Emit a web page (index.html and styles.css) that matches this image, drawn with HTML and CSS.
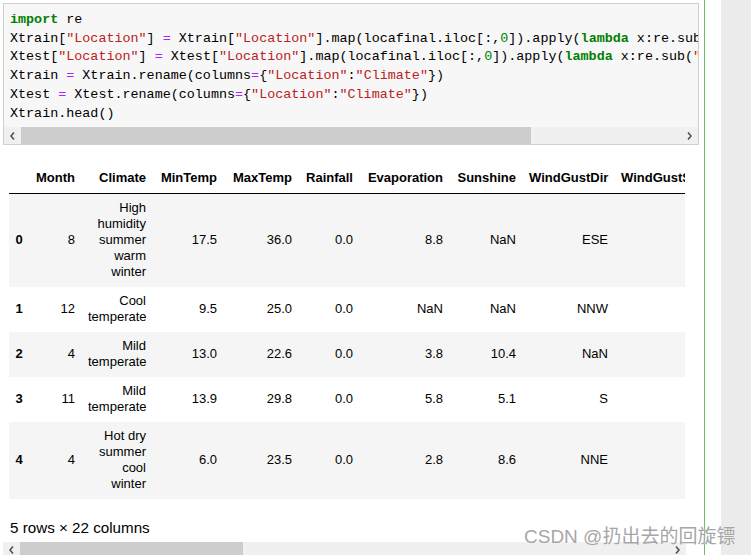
FILE: index.html
```html
<!DOCTYPE html>
<html>
<head>
<meta charset="utf-8">
<link rel="stylesheet" href="styles.css">
</head>
<body>
<div class="page">
  <div class="main">
    <div class="code-cell">
      <div class="code"><span class="kw">import</span> re
Xtrain[<span class="str">"Location"</span>] <span class="op">=</span> Xtrain[<span class="str">"Location"</span>].map(locafinal.iloc[:,<span class="num">0</span>]).apply(<span class="kw">lambda</span> x:re.sub(<span class="str">"\s+"</span>,<span class="str">" "</span>,x))
Xtest[<span class="str">"Location"</span>] <span class="op">=</span> Xtest[<span class="str">"Location"</span>].map(locafinal.iloc[:,<span class="num">0</span>]).apply(<span class="kw">lambda</span> x:re.sub(<span class="str">"\s+"</span>,<span class="str">" "</span>,x))
Xtrain <span class="op">=</span> Xtrain.rename(columns<span class="op">=</span>{<span class="str">"Location"</span>:<span class="str">"Climate"</span>})
Xtest <span class="op">=</span> Xtest.rename(columns<span class="op">=</span>{<span class="str">"Location"</span>:<span class="str">"Climate"</span>})
Xtrain.head()</div>
      <div class="hscroll code-scroll">
        <div class="sbtn"><svg width="5" height="8" viewBox="0 0 5 8"><path d="M4 0.5 L1 4 L4 7.5" fill="none" stroke="#505050" stroke-width="1.6"/></svg></div>
        <div class="thumb code-thumb"></div>
        <div class="track-rest"></div>
        <div class="sbtn"><svg width="5" height="8" viewBox="0 0 5 8"><path d="M1 0.5 L4 4 L1 7.5" fill="none" stroke="#505050" stroke-width="1.6"/></svg></div>
      </div>
    </div>

    <div class="output">
      <table class="df">
        <thead>
          <tr><th class="c-idx"></th><th class="c-month">Month</th><th class="c-climate">Climate</th><th class="c-min">MinTemp</th><th class="c-max">MaxTemp</th><th class="c-rain">Rainfall</th><th class="c-evap">Evaporation</th><th class="c-sun">Sunshine</th><th class="c-wgd">WindGustDir</th><th class="c-wgs">WindGustSpeed</th><th class="c-wd9">WindDir9am</th></tr>
        </thead>
        <tbody>
          <tr class="odd"><th>0</th><td>8</td><td>High humidity summer warm winter</td><td>17.5</td><td>36.0</td><td>0.0</td><td>8.8</td><td>NaN</td><td>ESE</td><td>48.0</td><td>SE</td></tr>
          <tr><th>1</th><td>12</td><td>Cool temperate</td><td>9.5</td><td>25.0</td><td>0.0</td><td>NaN</td><td>NaN</td><td>NNW</td><td>30.0</td><td>N</td></tr>
          <tr class="odd"><th>2</th><td>4</td><td>Mild temperate</td><td>13.0</td><td>22.6</td><td>0.0</td><td>3.8</td><td>10.4</td><td>NaN</td><td>NaN</td><td>NaN</td></tr>
          <tr><th>3</th><td>11</td><td>Mild temperate</td><td>13.9</td><td>29.8</td><td>0.0</td><td>5.8</td><td>5.1</td><td>S</td><td>37.0</td><td>SSE</td></tr>
          <tr class="odd"><th>4</th><td>4</td><td>Hot dry summer cool winter</td><td>6.0</td><td>23.5</td><td>0.0</td><td>2.8</td><td>8.6</td><td>NNE</td><td>41.0</td><td>ENE</td></tr>
        </tbody>
      </table>
    </div>

    <p class="summary">5 rows × 22 columns</p>

    <div class="hscroll out-scroll">
      <div class="sbtn"><svg width="5" height="8" viewBox="0 0 5 8"><path d="M4 0.5 L1 4 L4 7.5" fill="none" stroke="#505050" stroke-width="1.6"/></svg></div>
      <div class="thumb out-thumb"></div>
      <div class="track-rest"></div>
      <div class="sbtn"><svg width="5" height="8" viewBox="0 0 5 8"><path d="M1 0.5 L4 4 L1 7.5" fill="none" stroke="#505050" stroke-width="1.6"/></svg></div>
    </div>
  </div>
  <div class="sep"></div>
  <div class="gap"></div>
  <div class="rail"></div>
  <div class="watermark">CSDN @扔出去的回旋镖</div>
</div>
</body>
</html>
```

FILE: styles.css
```css
html, body {
  margin: 0;
  padding: 0;
  background: #fff;
}
body {
  font-family: "Liberation Sans", Arial, sans-serif;
  color: #000;
  height: 555px;
  overflow: hidden;
}
.page {
  display: flex;
  height: 555px;
  position: relative;
}
.main {
  width: 704px;
  flex: none;
  overflow: hidden;
}
.sep {
  width: 1px;
  flex: none;
  background: #6cbf6a;
}
.gap {
  width: 16px;
  flex: none;
}
.rail {
  flex: 1;
  background: #ebebeb;
}

/* code cell */
.code-cell {
  margin: 3px 0 0 3px;
  width: 694px;
  border: 1px solid #cfcfcf;
  background: #f7f7f7;
}
.code {
  padding: 7px 0 4px 6px;
  font-family: "Liberation Mono", "Courier New", monospace;
  font-size: 13.4px;
  line-height: 18.7px;
  white-space: pre;
  overflow: hidden;
  color: #000;
}
.kw { color: #008000; font-weight: bold; }
.op { color: #aa22ff; }
.str { color: #ba2121; }
.num { color: #008000; }

/* scrollbars */
.hscroll {
  display: flex;
  height: 17px;
  background: #f0f0f0;
}
.sbtn {
  width: 17px;
  flex: none;
  display: flex;
  align-items: center;
  justify-content: center;
}
.thumb {
  background: #cdcdcd;
  flex: none;
}
.track-rest { flex: 1; }
.code-thumb { width: 510px; }
.out-scroll {
  margin: 6px 0 0 3px;
  width: 683px;
}
.out-thumb { width: 223px; }

/* dataframe output */
.output {
  margin: 18.5px 0 0 9px;
  width: 676px;
  overflow: hidden;
}
.df {
  table-layout: fixed;
  width: 807.5px;
  border-collapse: collapse;
  border-spacing: 0;
  font-size: 13px;
  line-height: 16px;
}
.c-idx { width: 7.5px; }
.c-month { width: 39px; }
.c-climate { width: 58px; }
.c-min { width: 58px; }
.c-max { width: 62px; }
.c-rain { width: 48px; }
.c-evap { width: 77px; }
.c-sun { width: 60px; }
.c-wgd { width: 79px; }
.c-wgs { width: 96px; }
.c-wd9 { width: 80px; }
.df th, .df td {
  padding: 6.5px;
  text-align: right;
  vertical-align: middle;
  white-space: normal;
  overflow: hidden;
}
.df thead th {
  font-weight: bold;
  border-bottom: 1px solid #000;
  white-space: nowrap;
}
.df tbody th {
  font-weight: bold;
  text-align: left;
}
.df tbody tr.odd {
  background: #f5f5f5;
}

.summary {
  margin: 20px 0 0 10px;
  font-size: 15.2px;
  line-height: 17px;
}

.watermark {
  position: absolute;
  left: 524px;
  top: 527px;
  font-family: "Liberation Sans", "Noto Sans CJK SC", sans-serif;
  font-size: 19px;
  line-height: 20px;
  color: #a6a6a6;
  white-space: nowrap;
  text-shadow: 0 0 1px #fff;
}
```
